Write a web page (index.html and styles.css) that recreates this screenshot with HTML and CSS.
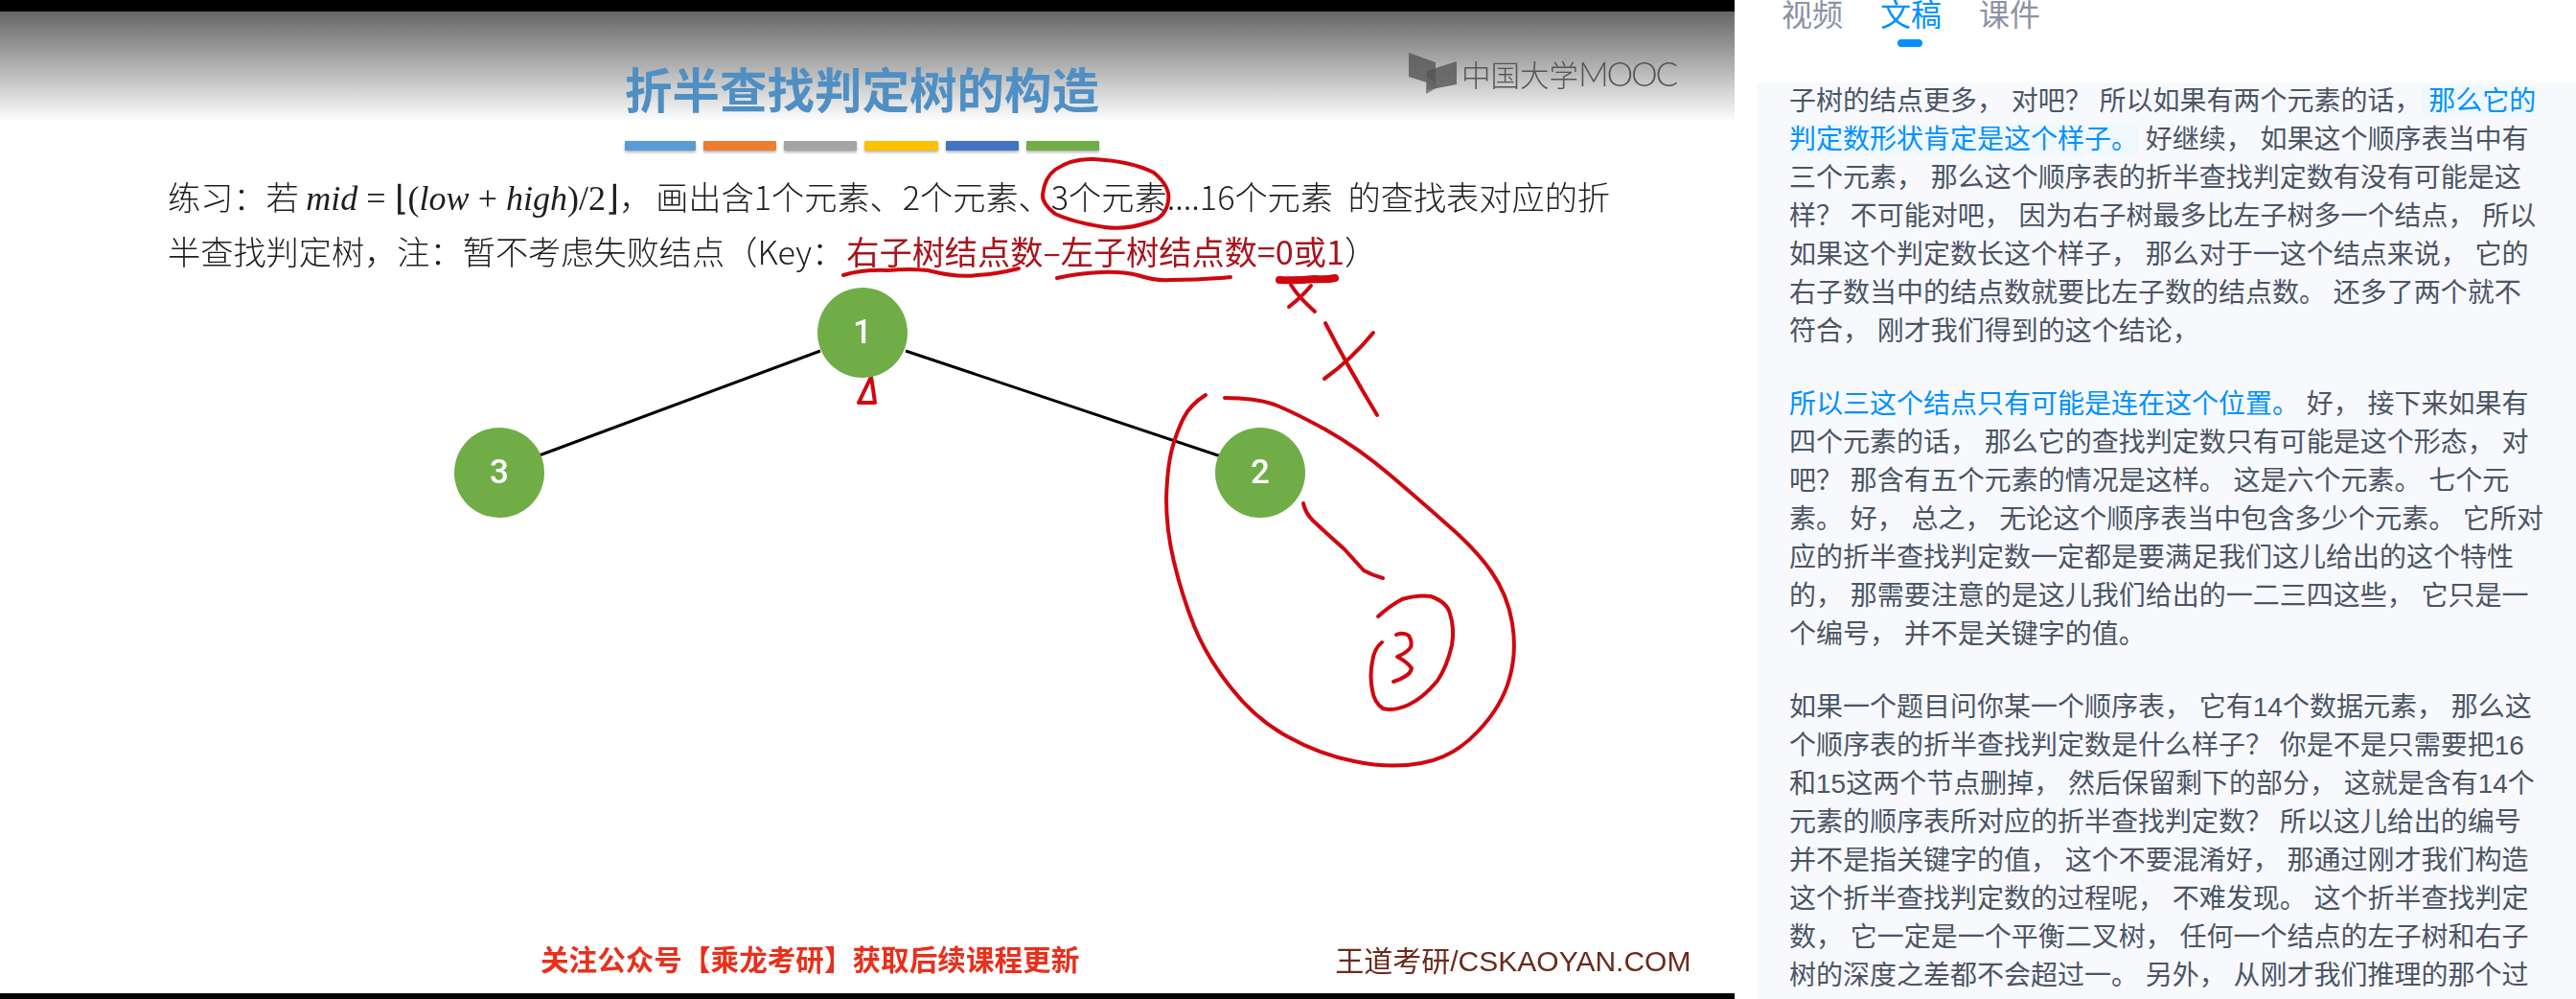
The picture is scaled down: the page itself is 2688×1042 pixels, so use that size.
FILE: index.html
```html
<!DOCTYPE html>
<html lang="zh-CN">
<head>
<meta charset="utf-8">
<title>折半查找判定树的构造</title>
<link rel="stylesheet" href="styles.css">
</head>
<body>
<div class="page">
  <section class="video">
    <div class="edge-top"></div>
    <header class="slide-head">
      <h1 class="slide-title">折半查找判定树的构造</h1>
      <div class="logo">
        <svg class="logo-mark" width="50" height="43" viewBox="0 0 50 43">
          <polygon points="0,0 28,10 28,34 0,25" fill="#555" opacity=".8"/>
          <polygon points="50,9 50,33 19,39 19,19" fill="#555" opacity=".8"/>
          <polygon points="18,24 18,43 32,35" fill="#666" opacity=".7"/>
        </svg>
        <span class="logo-text">中国大学<span class="logo-latin">MOOC</span></span>
      </div>
    </header>
    <div class="bars">
      <i class="bar b1"></i><i class="bar b2"></i><i class="bar b3"></i><i class="bar b4"></i><i class="bar b5"></i><i class="bar b6"></i>
    </div>
    <div class="exercise">
      <p class="ex-line">练习&#xFF1A;若 <span class="math"><i>mid</i> = ⌊(<i>low</i> + <i>high</i>)/2⌋</span>&#xFF0C;<span class="sp-b">画出含1个元素、2个元素、3个元素....16个元素 的查找表对应的折</span></p>
      <p class="ex-line">半查找判定树&#xFF0C;注&#xFF1A;暂不考虑失败结点&#xFF08;Key&#xFF1A;<span class="key">右子树结点数–左子树结点数=0或1</span>&#xFF09;</p>
    </div>
    <div class="spacer"></div>
    <footer class="slide-foot">
      <span class="foot-red">关注公众号【乘龙考研】获取后续课程更新</span>
      <span class="foot-site">王道考研/CSKAOYAN.COM</span>
    </footer>
    <div class="edge-bottom"></div>

    <svg class="ink" viewBox="0 0 1810 1042" width="1810" height="1042">
      <g class="tree-lines">
        <line x1="856" y1="366" x2="560" y2="476"/>
        <line x1="945" y1="366" x2="1274" y2="476"/>
      </g>
      <g class="pen">
        <path d="M1141 166Q1180 168 1204 180Q1222 195 1219 210Q1216 228 1198 232Q1175 240 1153 237Q1120 232 1101 223Q1087 212 1088 203Q1090 185 1101 177Q1118 165 1141 166"/>
        <path d="M880 287Q900 281 926 282Q950 280 968 282Q1000 290 1019 287Q1040 286 1063 280"/>
        <path d="M1103 290Q1125 285 1149 284Q1170 283 1187 287Q1205 293 1221 292Q1255 292 1284 289"/>
        <path class="thick" d="M1335 292Q1352 293 1372 291Q1385 292 1393 290"/>
        <path d="M1347 297Q1355 310 1372 325M1368 298Q1358 310 1345 320"/>
        <path d="M1383 337Q1405 380 1437 433M1433 347Q1410 375 1382 395"/>
        <path d="M909 393L896 420L913 420Q911 405 909 393"/>
        <path d="M1258 412Q1242 422 1235 436Q1228 450 1223 468Q1218 487 1217 520Q1217 553 1225 586Q1233 620 1246 653Q1260 687 1285 718Q1310 750 1343 768Q1377 787 1413 794Q1450 802 1483 796Q1517 790 1542 763Q1567 737 1575 708Q1583 680 1578 650Q1573 620 1556 596Q1540 573 1511 548Q1483 523 1450 495Q1417 467 1383 448Q1350 430 1330 422Q1310 415 1278 415"/>
        <path d="M1360 525Q1362 535 1370 543Q1386 558 1403 573Q1413 584 1423 595Q1432 600 1443 603"/>
        <path d="M1438 643Q1450 632 1463 625Q1480 620 1493 622Q1510 628 1513 640Q1518 656 1515 673Q1510 695 1500 710Q1485 728 1470 735Q1455 742 1443 739Q1434 733 1432 720Q1429 705 1432 690Q1434 676 1442 670"/>
        <path d="M1457 662Q1465 659 1470 663Q1474 670 1472 675Q1468 681 1458 685Q1468 690 1473 697Q1472 702 1467 705Q1461 709 1454 711"/>
      </g>
    </svg>
    <div class="node n1">1</div>
    <div class="node n2">2</div>
    <div class="node n3">3</div>
  </section>

  <aside class="panel">
    <nav class="tabs">
      <div class="tab">视频</div>
      <div class="tab active">文稿</div>
      <div class="tab">课件</div>
    </nav>
    <div class="transcript">
      <p>子树的结点更多&#xFF0C; 对吧&#xFF1F; 所以如果有两个元素的话&#xFF0C;<span class="now"> 那么它的判定数形状肯定是这个样子。</span> 好继续&#xFF0C; 如果这个顺序表当中有三个元素&#xFF0C; 那么这个顺序表的折半查找判定数有没有可能是这样&#xFF1F; 不可能对吧&#xFF0C; 因为右子树最多比左子树多一个结点&#xFF0C; 所以如果这个判定数长这个样子&#xFF0C; 那么对于一这个结点来说&#xFF0C; 它的右子数当中的结点数就要比左子数的结点数。 还多了两个就不符合&#xFF0C; 刚才我们得到的这个结论&#xFF0C;</p>
      <p><span class="blue">所以三这个结点只有可能是连在这个位置。</span> 好&#xFF0C; 接下来如果有四个元素的话&#xFF0C; 那么它的查找判定数只有可能是这个形态&#xFF0C; 对吧&#xFF1F; 那含有五个元素的情况是这样。 这是六个元素。 七个元素。 好&#xFF0C; 总之&#xFF0C; 无论这个顺序表当中包含多少个元素。 它所对应的折半查找判定数一定都是要满足我们这儿给出的这个特性的&#xFF0C; 那需要注意的是这儿我们给出的一二三四这些&#xFF0C; 它只是一个编号&#xFF0C; 并不是关键字的值。</p>
      <p>如果一个题目问你某一个顺序表&#xFF0C; 它有14个数据元素&#xFF0C; 那么这个顺序表的折半查找判定数是什么样子&#xFF1F; 你是不是只需要把16和15这两个节点删掉&#xFF0C; 然后保留剩下的部分&#xFF0C; 这就是含有14个元素的顺序表所对应的折半查找判定数&#xFF1F; 所以这儿给出的编号并不是指关键字的值&#xFF0C; 这个不要混淆好&#xFF0C; 那通过刚才我们构造这个折半查找判定数的过程呢&#xFF0C; 不难发现。 这个折半查找判定数&#xFF0C; 它一定是一个平衡二叉树&#xFF0C; 任何一个结点的左子树和右子树的深度之差都不会超过一。 另外&#xFF0C; 从刚才我们推理的那个过</p>
    </div>
  </aside>
</div>
</body>
</html>
```

FILE: styles.css
```css
* { box-sizing: border-box; }
html, body { margin: 0; height: 100%; background: #fff; overflow: hidden; }
body { font-family: "Liberation Sans", "Noto Sans CJK SC", sans-serif; }
p, h1 { margin: 0; }

.page { display: flex; width: 2688px; height: 1042px; overflow: hidden; }

/* video slide */
.video {
  position: relative;
  flex: 0 0 1810px;
  height: 1042px;
  display: flex;
  flex-direction: column;
  background: #fff;
  overflow: hidden;
}
.edge-top { flex: 0 0 12px; background: #000; }
.edge-bottom { flex: 0 0 6px; background: #000; }

.slide-head {
  flex: 0 0 115px;
  display: flex;
  align-items: flex-start;
  padding-left: 652px;
  background: linear-gradient(#666 0%, #9a9a9a 35%, #d8d8d8 75%, #fff 100%);
}
.slide-title {
  width: 496px;
  margin-top: 49px;
  font-family: "Noto Sans CJK SC", sans-serif;
  font-size: 49.5px;
  line-height: 62px;
  font-weight: 700;
  color: #4f8fc3;
  white-space: nowrap;
  filter: blur(.5px);
}
.logo { display: flex; align-items: flex-start; margin-left: 322px; margin-top: 43px; filter: blur(.6px); }
.logo-mark { flex: none; }
.logo-text {
  margin-left: 5px;
  margin-top: 1px;
  font-family: "Noto Sans CJK SC", sans-serif;
  font-weight: 300;
  font-size: 30.5px;
  line-height: 40px;
  color: #555;
  white-space: nowrap;
}
.logo-latin { font-family: "Lato", sans-serif; font-weight: 300; font-size: 35px; letter-spacing: -2.2px; }

.bars { flex: 0 0 auto; display: flex; gap: 8px; padding-left: 652px; margin-top: 20px; height: 10px; }
.bar { display: block; width: 76px; height: 10px; box-shadow: 0 2px 3px rgba(0,0,0,.3); border-radius: 1px; }
.b1 { background: #5b9bd5; width: 74px; }
.b2 { background: #ed7d31; }
.b3 { background: #a5a5a5; }
.b4 { background: #ffc000; width: 77px; }
.b5 { background: #4472c4; }
.b6 { background: #70ad47; }

.exercise { flex: 0 0 auto; padding-left: 175px; margin-top: 19px; filter: blur(.4px); }
.ex-line {
  height: 57px;
  font-family: "Noto Sans CJK SC", sans-serif;
  font-size: 34.2px;
  line-height: 57px;
  color: #1d1d1d;
  white-space: nowrap;
  font-weight: 300;
}
.math { font-family: "Liberation Serif", serif; font-size: 36px; line-height: 1; }
.sp-b { margin-left: 4px; word-spacing: 8px; }
.key { margin-left: 2px; color: #a8141c; font-weight: 400; }

.spacer { flex: 1 1 auto; }
.slide-foot {
  flex: 0 0 auto;
  display: flex;
  align-items: center;
  padding-left: 564px;
  height: 40px;
  margin-bottom: 16px;
  filter: blur(.4px);
}
.foot-red {
  font-family: "Noto Sans CJK SC", sans-serif;
  font-size: 29.6px;
  line-height: 40px;
  font-weight: 700;
  color: #e8301c;
  white-space: nowrap;
}
.foot-site {
  margin-left: 267px;
  margin-top: 6px;
  font-size: 30px;
  line-height: 40px;
  color: #6a2a1c;
  white-space: nowrap;
}

/* free-canvas drawing on the slide */
.ink { position: absolute; left: 0; top: 0; pointer-events: none; }
.tree-lines line { stroke: #000; stroke-width: 3; }
.pen path { fill: none; stroke: #d0070f; stroke-width: 4; stroke-linecap: round; stroke-linejoin: round; }
.pen path.thick { stroke-width: 8; }

.node {
  position: absolute;
  width: 94px;
  height: 94px;
  border-radius: 50%;
  background: #70ad47;
  color: #fff;
  font-family: Roboto, sans-serif;
  font-size: 35px;
  font-weight: 500;
  line-height: 94px;
  text-align: center;
  filter: blur(.3px);
}
.n1 { left: 853px; top: 300px; }
.n2 { left: 1268px; top: 446px; }
.n3 { left: 474px; top: 446px; }

/* right panel */
.panel { flex: 1 1 auto; min-width: 0; height: 1042px; display: flex; flex-direction: column; background: #fff; overflow: hidden; }
.tabs { flex: 0 0 86px; display: flex; gap: 41px; padding-left: 49px; margin-top: -3px; }
.tab {
  position: relative;
  width: 62px;
  height: 36px;
  font-family: "Noto Sans CJK SC", sans-serif;
  font-size: 32px;
  line-height: 32px;
  white-space: nowrap;
  color: #8a93a6;
}
.tab.active { color: #0091ff; }
.tab.active::after {
  content: "";
  position: absolute;
  left: 18px;
  top: 44px;
  width: 26px;
  height: 8px;
  border-radius: 4px;
  background: #0091ff;
}
.transcript {
  flex: 1 1 auto;
  margin-left: 24px;
  padding: 0 32px 0 33px;
  background: #f7f9fd;
  overflow: hidden;
  margin-top: 3px;
  font-size: 28px;
  line-height: 40px;
  color: #4b5565;
}
.transcript p { margin-bottom: 36px; }
.now { color: #0091ff; background: #f0f8ff; }
.blue { color: #0091ff; }
```
